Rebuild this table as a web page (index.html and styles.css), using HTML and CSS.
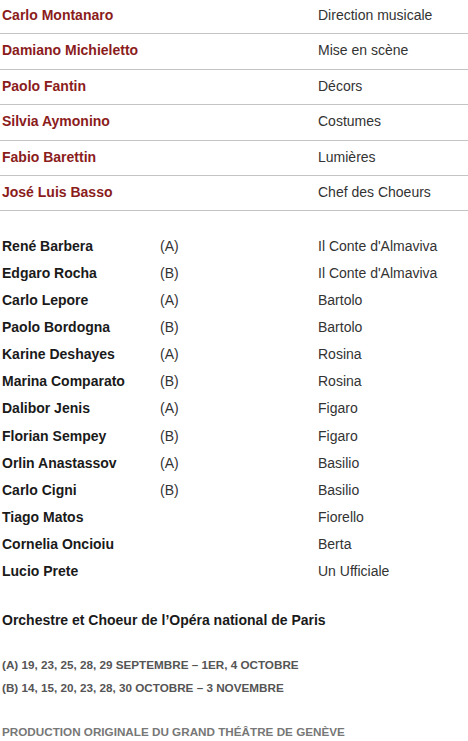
FILE: index.html
```html
<!DOCTYPE html>
<html lang="fr">
<head>
<meta charset="utf-8">
<title>Distribution</title>
<link rel="stylesheet" href="styles.css">
</head>
<body>
<div class="page">
  <div class="crew">
    <div class="crew-row"><span class="crew-name">Carlo Montanaro</span><span class="role">Direction musicale</span></div>
    <div class="crew-row"><span class="crew-name">Damiano Michieletto</span><span class="role">Mise en scène</span></div>
    <div class="crew-row"><span class="crew-name">Paolo Fantin</span><span class="role">Décors</span></div>
    <div class="crew-row"><span class="crew-name">Silvia Aymonino</span><span class="role">Costumes</span></div>
    <div class="crew-row"><span class="crew-name">Fabio Barettin</span><span class="role">Lumières</span></div>
    <div class="crew-row"><span class="crew-name">José Luis Basso</span><span class="role">Chef des Choeurs</span></div>
  </div>

  <div class="cast">
    <div class="cast-row"><span class="cast-name">René Barbera</span><span class="cast-alt">(A)</span><span class="role">Il Conte d'Almaviva</span></div>
    <div class="cast-row"><span class="cast-name">Edgaro Rocha</span><span class="cast-alt">(B)</span><span class="role">Il Conte d'Almaviva</span></div>
    <div class="cast-row"><span class="cast-name">Carlo Lepore</span><span class="cast-alt">(A)</span><span class="role">Bartolo</span></div>
    <div class="cast-row"><span class="cast-name">Paolo Bordogna</span><span class="cast-alt">(B)</span><span class="role">Bartolo</span></div>
    <div class="cast-row"><span class="cast-name">Karine Deshayes</span><span class="cast-alt">(A)</span><span class="role">Rosina</span></div>
    <div class="cast-row"><span class="cast-name">Marina Comparato</span><span class="cast-alt">(B)</span><span class="role">Rosina</span></div>
    <div class="cast-row"><span class="cast-name">Dalibor Jenis</span><span class="cast-alt">(A)</span><span class="role">Figaro</span></div>
    <div class="cast-row"><span class="cast-name">Florian Sempey</span><span class="cast-alt">(B)</span><span class="role">Figaro</span></div>
    <div class="cast-row"><span class="cast-name">Orlin Anastassov</span><span class="cast-alt">(A)</span><span class="role">Basilio</span></div>
    <div class="cast-row"><span class="cast-name">Carlo Cigni</span><span class="cast-alt">(B)</span><span class="role">Basilio</span></div>
    <div class="cast-row"><span class="cast-name">Tiago Matos</span><span class="cast-alt"></span><span class="role">Fiorello</span></div>
    <div class="cast-row"><span class="cast-name">Cornelia Oncioiu</span><span class="cast-alt"></span><span class="role">Berta</span></div>
    <div class="cast-row"><span class="cast-name">Lucio Prete</span><span class="cast-alt"></span><span class="role">Un Ufficiale</span></div>
  </div>

  <p class="ensemble">Orchestre et Choeur de l’Opéra national de Paris</p>

  <div class="dates">
    <p class="date-line">(A) 19, 23, 25, 28, 29 SEPTEMBRE – 1ER, 4 OCTOBRE</p>
    <p class="date-line">(B) 14, 15, 20, 23, 28, 30 OCTOBRE – 3 NOVEMBRE</p>
  </div>

  <p class="production">PRODUCTION ORIGINALE DU GRAND THÉÂTRE DE GENÈVE</p>
</div>
</body>
</html>
```

FILE: styles.css
```css
html, body {
  margin: 0;
  padding: 0;
  background: #ffffff;
}

body {
  font-family: "Liberation Sans", Arial, sans-serif;
  font-size: 14px;
  color: #333333;
}

.page {
  width: 468px;
  overflow: hidden;
}

.crew {
  margin-top: -1px;
}

.crew-row {
  display: grid;
  grid-template-columns: 316px 1fr;
  padding: 8px 2px 10.4px;
  line-height: 16px;
  border-bottom: 1px solid #c4c4c4;
}

.crew-name {
  font-weight: bold;
  color: #8b1c1c;
}

.role {
  color: #333333;
}

.cast {
  margin-top: 21px;
}

.cast-row {
  display: grid;
  grid-template-columns: 158px 158px 1fr;
  padding: 5.5px 2px;
  line-height: 16.1px;
}

.cast-name {
  font-weight: bold;
  color: #1a1a1a;
}

.cast-alt {
  color: #333333;
}

.ensemble {
  margin: 27px 0 0;
  padding: 0 2px;
  line-height: 16px;
  font-weight: bold;
  color: #1a1a1a;
}

.dates {
  margin-top: 25px;
}

.date-line {
  margin: 0;
  padding: 0 2px;
  font-size: 11.7px;
  line-height: 23px;
  font-weight: bold;
  color: #555555;
}

.production {
  margin: 21px 0 0;
  padding: 0 2px;
  font-size: 11.7px;
  line-height: 23px;
  font-weight: bold;
  color: #777777;
}
```
